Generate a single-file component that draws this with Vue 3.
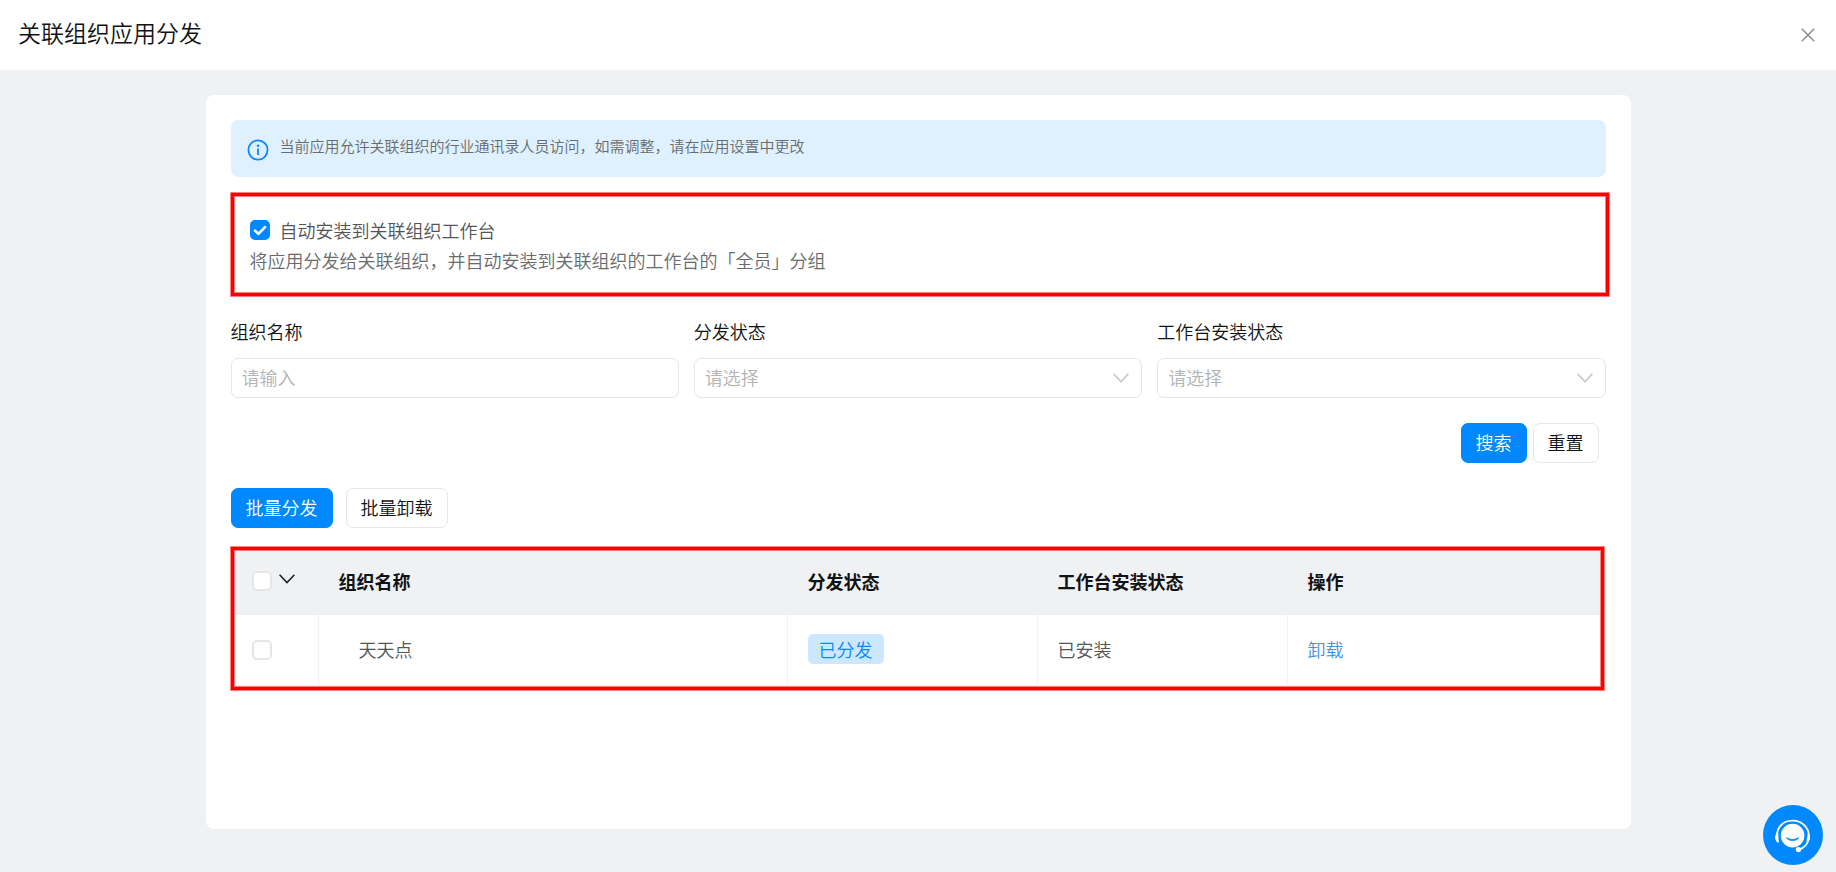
<script setup>
import { ref } from 'vue'

const autoInstall = ref(true)
const orgName = ref('')
const filters = ref([
  { id: 'dispatch-status', label: '分发状态', value: '', options: ['已分发', '未分发'] },
  { id: 'install-status', label: '工作台安装状态', value: '', options: ['已安装', '未安装'] },
])
const rows = ref([
  { name: '天天点', dispatch: '已分发', install: '已安装', checked: false },
])
const allChecked = ref(false)

function toggleAll() {
  rows.value.forEach((row) => { row.checked = allChecked.value })
}

function reset() {
  orgName.value = ''
  filters.value.forEach((filter) => { filter.value = '' })
}
</script>

<template>
  <div class="page">
    <header class="header">
      <h1 class="title">关联组织应用分发</h1>
      <button class="close" type="button" aria-label="关闭">
        <svg width="14" height="14" viewBox="0 0 14 14" fill="none" stroke="currentColor" stroke-width="1.4">
          <path d="M0.8 0.8 13.2 13.2M13.2 0.8 0.8 13.2" />
        </svg>
      </button>
    </header>

    <main class="main">
      <section class="card">
        <div class="notice" role="note">
          <svg class="notice-icon" width="22" height="22" viewBox="0 0 22 22" fill="none">
            <circle cx="11" cy="11" r="9.6" stroke="#0a87ff" stroke-width="1.8" />
            <circle cx="11" cy="6.8" r="1.3" fill="#0a87ff" />
            <path d="M11 9.6V16" stroke="#0a87ff" stroke-width="1.8" />
          </svg>
          <p class="notice-text">当前应用允许关联组织的行业通讯录人员访问，如需调整，请在应用设置中更改</p>
        </div>

        <div class="outlined install">
          <label class="install-label">
            <span class="tick">
              <input v-model="autoInstall" type="checkbox" class="checkbox" />
              <svg class="tick-mark" width="20" height="20" viewBox="0 0 20 20" fill="none">
                <path d="M5 10.6 8.4 13.8 15 7.2" stroke="#fff" stroke-width="2.6" stroke-linecap="round" stroke-linejoin="round" />
              </svg>
            </span>
            自动安装到关联组织工作台
          </label>
          <p class="install-hint">将应用分发给关联组织，并自动安装到关联组织的工作台的「全员」分组</p>
        </div>

        <form class="filters" @submit.prevent>
          <div class="fields">
            <div class="field">
              <label for="org-name">组织名称</label>
              <input id="org-name" v-model="orgName" class="control" type="text" placeholder="请输入" />
            </div>
            <div v-for="filter in filters" :key="filter.id" class="field">
              <label :for="filter.id">{{ filter.label }}</label>
              <div class="select-wrap">
                <select :id="filter.id" v-model="filter.value" class="control select">
                  <option value="">请选择</option>
                  <option v-for="option in filter.options" :key="option" :value="option">{{ option }}</option>
                </select>
                <svg class="select-arrow" width="18" height="12" viewBox="0 0 18 12" fill="none">
                  <path d="M1.6 1.8 9 9.6 16.4 1.8" stroke="#c9ccd1" stroke-width="1.8" />
                </svg>
              </div>
            </div>
          </div>
          <div class="form-actions">
            <button class="btn primary" type="submit">搜索</button>
            <button class="btn" type="button" @click="reset">重置</button>
          </div>
        </form>

        <div class="batch-actions">
          <button class="btn primary" type="button">批量分发</button>
          <button class="btn" type="button">批量卸载</button>
        </div>

        <div class="outlined table-box">
          <table class="table">
            <colgroup>
              <col class="col-check" />
              <col />
              <col class="col-status" />
              <col class="col-status" />
              <col class="col-action" />
            </colgroup>
            <thead>
              <tr>
                <th class="check-cell">
                  <div class="check-group">
                    <input v-model="allChecked" type="checkbox" class="checkbox" aria-label="全选" @change="toggleAll" />
                    <button class="expand" type="button" aria-label="选择范围">
                      <svg width="18" height="12" viewBox="0 0 18 12" fill="none">
                        <path d="M1.6 1.8 9 9.6 16.4 1.8" stroke="#1c1e21" stroke-width="1.5" />
                      </svg>
                    </button>
                  </div>
                </th>
                <th>组织名称</th>
                <th>分发状态</th>
                <th>工作台安装状态</th>
                <th>操作</th>
              </tr>
            </thead>
            <tbody>
              <tr v-for="row in rows" :key="row.name">
                <td class="check-cell">
                  <div class="check-group">
                    <input v-model="row.checked" type="checkbox" class="checkbox" :aria-label="row.name" />
                  </div>
                </td>
                <td class="name-cell">{{ row.name }}</td>
                <td><span class="tag">{{ row.dispatch }}</span></td>
                <td>{{ row.install }}</td>
                <td><a class="link" href="#">卸载</a></td>
              </tr>
            </tbody>
          </table>
        </div>
      </section>

      <svg class="watermark" aria-hidden="true" width="100%" height="100%">
        <defs>
          <pattern id="watermark-tile" width="125" height="125" patternUnits="userSpaceOnUse">
            <text x="88" y="43" text-anchor="middle" transform="rotate(-14 88 38)">宜信·小蕾</text>
          </pattern>
        </defs>
        <rect width="100%" height="100%" fill="url(#watermark-tile)" />
      </svg>
    </main>

    <button class="support" type="button" aria-label="在线客服">
      <svg width="60" height="60" viewBox="0 0 60 60" fill="none">
        <path d="M14.6 36.5C11.5 24 19 15.6 29.5 15.6S47.5 24 45.6 34.5C44.4 39.5 41 43 36 44.6" stroke="#fff" stroke-width="1.8" stroke-linecap="round" />
        <path d="M14.2 28.2C11.6 29.6 11.3 34.4 13.8 36.4L15.8 37.8 15.2 28Z" fill="#fff" />
        <path d="M44.9 28.2C47.6 29.6 47.9 34.4 45.2 36.4L43.4 36.8Z" fill="#fff" />
        <circle cx="29.6" cy="30.6" r="11.8" fill="#fff" />
        <circle cx="35.4" cy="44.6" r="2.6" fill="#fff" />
        <path d="M23.4 32.6C26.6 35 32.4 35 35.8 32.6 34.6 36.4 25 36.6 23.4 32.6Z" fill="#0089ff" stroke="#0089ff" stroke-width="0.8" stroke-linejoin="round" />
      </svg>
    </button>
  </div>
</template>

<style>
body {
  background: #f0f1f3;
}
</style>

<style scoped>
.page {
  display: flex;
  flex-direction: column;
  min-height: 100vh;
  background: #f0f1f3;
  color: #101214;
  font: 350 18px/30px "Noto Sans CJK SC", "Noto Sans", sans-serif;
}

.page *,
.page *::before {
  box-sizing: border-box;
}

button,
input,
select {
  font: inherit;
}

p,
h1 {
  margin: 0;
}

.header {
  display: flex;
  align-items: center;
  justify-content: space-between;
  height: 70px;
  padding: 0 18px;
  background: #fff;
}

.title {
  padding-bottom: 7px;
  font-size: 23px;
  font-weight: 350;
}

.close {
  display: flex;
  padding: 3px;
  border: 0;
  background: none;
  color: #85888c;
}

.main {
  position: relative;
  display: flex;
  flex: 1;
  flex-direction: column;
  padding: 25px 25px 43px;
}

.card {
  display: flex;
  flex: 1;
  flex-direction: column;
  width: 100%;
  max-width: 1425px;
  margin: 0 auto;
  padding: 25px;
  border-radius: 8px;
  background: #fff;
}

.notice {
  display: flex;
  align-items: center;
  gap: 11px;
  height: 57px;
  padding: 0 16px;
  border-radius: 8px;
  background: #dff1ff;
}

.notice-icon {
  margin-top: 2px;
}

.notice-text {
  padding-bottom: 6px;
  color: #696b6c;
  font-size: 15px;
}

.outlined {
  border: 3px solid #f00;
  box-shadow: 0 0 0 1px #ff8080, inset 0 0 0 1px #ff8080;
}

.install {
  margin: 16px -3px 0 0;
  padding: 19px 16px 18px;
}

.install-label {
  display: flex;
  align-items: center;
  gap: 10px;
  width: fit-content;
  color: #525456;
}

.install-hint {
  color: #696b6c;
}

.tick {
  position: relative;
  display: flex;
}

.tick-mark {
  position: absolute;
  inset: 0;
  pointer-events: none;
}

.checkbox {
  width: 20px;
  height: 20px;
  margin: 0;
  border: 2px solid #e5e6e8;
  border-radius: 5px;
  appearance: none;
  background: #fff;
}

.checkbox:checked {
  border-color: #0089ff;
  background: #0089ff;
}

.filters {
  margin-top: 20px;
}

.fields {
  display: grid;
  grid-template-columns: repeat(3, 1fr);
  gap: 15px;
}

.field {
  display: flex;
  flex-direction: column;
  gap: 12px;
}

.control {
  width: 100%;
  height: 40px;
  padding: 0 10px 2px;
  border: 1px solid #e5e6e8;
  border-radius: 7px;
  outline: 0;
  background: #fff;
  color: #b2b3b4;
}

.control::placeholder {
  color: #b2b3b4;
  opacity: 1;
}

.select-wrap {
  position: relative;
}

.select {
  display: block;
  appearance: none;
}

.select-arrow {
  position: absolute;
  top: 14px;
  right: 12px;
  pointer-events: none;
}

.form-actions {
  display: flex;
  justify-content: flex-end;
  gap: 6px;
  margin-top: 25px;
  padding-right: 7px;
}

.batch-actions {
  display: flex;
  gap: 13px;
  margin-top: 25px;
}

.btn {
  height: 40px;
  padding: 0 14px 3px;
  border: 1px solid #e5e6e8;
  border-radius: 7px;
  background: #fff;
  color: #101214;
}

.btn.primary {
  border-color: #0089ff;
  background: #0089ff;
  color: #fff;
}

.table-box {
  margin: 19px 2px 0 0;
  padding: 1px;
}

.table {
  width: 100%;
  border-spacing: 0;
  table-layout: fixed;
}

.col-check {
  width: 84px;
}

.col-status {
  width: 250px;
}

.col-action {
  width: 312px;
}

.table th {
  height: 64px;
  padding: 0 20px 4px;
  background: #f0f1f3;
  font-weight: 700;
  text-align: left;
}

.table td {
  height: 71px;
  padding: 0 20px 3px;
  border-right: 1px solid #eff0f1;
  border-bottom: 1px solid #eff0f1;
  color: #525456;
}

.table td:last-child {
  border-right: 0;
}

.table .check-cell {
  padding-right: 0;
  padding-left: 17px;
}

.table td.check-cell {
  padding-bottom: 0;
}

.table .name-cell {
  padding-left: 40px;
}

.check-group {
  display: flex;
  align-items: center;
  gap: 6px;
}

.expand {
  display: flex;
  padding: 0 0 4px;
  border: 0;
  background: none;
}

.tag {
  display: inline-block;
  padding: 0 11px;
  border-radius: 5px;
  background: #cce7ff;
  color: #0a87ff;
}

.link {
  color: #3d94dc;
  text-decoration: none;
}

.watermark {
  position: absolute;
  inset: 0;
  fill: #000;
  fill-opacity: 0.014;
  font-size: 14px;
  font-weight: 400;
  pointer-events: none;
}

.support {
  position: fixed;
  right: 13px;
  bottom: 7px;
  display: flex;
  padding: 0;
  border: 0;
  border-radius: 50%;
  background: #0089ff;
}
</style>
